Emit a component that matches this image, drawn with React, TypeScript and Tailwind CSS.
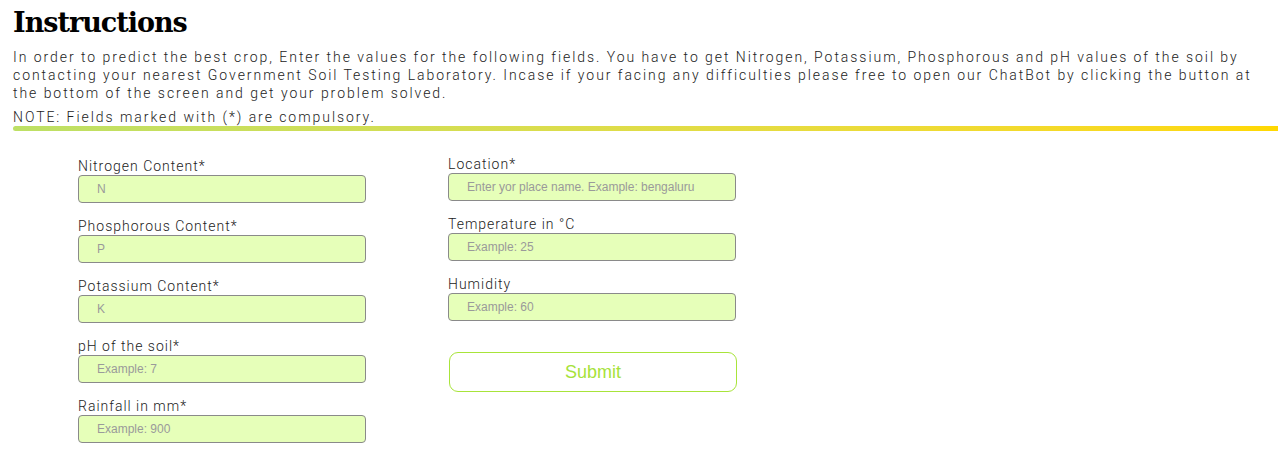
import React from "react";

const roboto = { fontFamily: "Roboto, 'Noto Sans', sans-serif" } as const;

function Field({ label, placeholder }: { label: string; placeholder: string }) {
  return (
    <div className="flex flex-col">
      <label className="-mt-[1px] text-[14px] leading-[18px] font-light tracking-[1px] text-[#222] font-[Roboto,sans-serif]">
        {label}
      </label>
      <input
        className="h-[28px] w-[288px] rounded-[4px] border border-[#8a8a8a] bg-[#e6ffb9] pl-[18px] text-[12px] font-[Arial,'Liberation_Sans',sans-serif] placeholder:text-[#9a9a9a] outline-none"
        placeholder={placeholder}
      />
    </div>
  );
}

export default function App() {
  return (
    <div className="w-[1278px] h-[476px] bg-white overflow-hidden pl-[13px]">
      <h1 className="pt-[4px] text-[27px] leading-[38px] font-bold tracking-[-1px] text-black font-['DejaVu_Serif',serif]">
        Instructions
      </h1>
      <p
        className="mt-[6px] pr-[15px] text-[14px] leading-[18px] font-light tracking-[1.95px] text-[#222]"
        style={roboto}
      >
        In order to predict the best crop, Enter the values for the following fields. You have to get Nitrogen, Potassium, Phosphorous and pH values of the soil by contacting your nearest Government Soil Testing Laboratory. Incase if your facing any difficulties please free to open our ChatBot by clicking the button at the bottom of the screen and get your problem solved.
      </p>
      <p
        className="mt-[6px] text-[14px] leading-[18px] font-light tracking-[1.95px] text-[#222]"
        style={roboto}
      >
        NOTE: Fields marked with (*) are compulsory.
      </p>
      <div className="h-[5px] rounded-l-[3px] bg-gradient-to-r from-[#bde065] to-[#ffd800]" />
      <div className="flex gap-[82px] pl-[65px] pt-[27px]">
        <div className="flex flex-col gap-[15px]">
          <Field label="Nitrogen Content*" placeholder="N" />
          <Field label="Phosphorous Content*" placeholder="P" />
          <Field label="Potassium Content*" placeholder="K" />
          <Field label="pH of the soil*" placeholder="Example: 7" />
          <Field label="Rainfall in mm*" placeholder="Example: 900" />
        </div>
        <div className="flex flex-col gap-[15px] -mt-[2px]">
          <Field label="Location*" placeholder="Enter yor place name. Example: bengaluru" />
          <Field label="Temperature in °C" placeholder="Example: 25" />
          <Field label="Humidity" placeholder="Example: 60" />
          <button className="mt-[16px] ml-[1px] h-[40px] w-[288px] rounded-[9px] border border-[#a8e43a] bg-white text-[18px] text-[#a6e23a] font-[Arial,'Liberation_Sans',sans-serif]">
            Submit
          </button>
        </div>
      </div>
    </div>
  );
}
